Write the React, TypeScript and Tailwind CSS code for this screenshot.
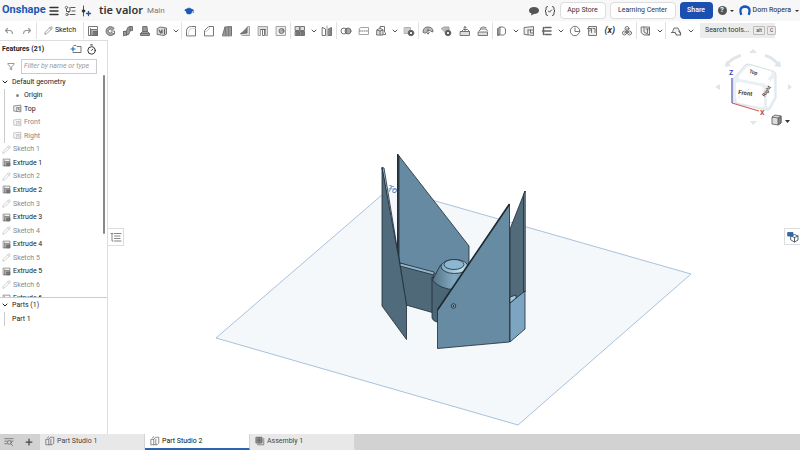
import type { ReactNode } from 'react';
import { ChevronDown, Filter, GraduationCap, Pencil, Plus, Timer } from 'lucide-react';

const S = '#666';
const G = '#999';

function Svg({ children, className = 'w-3 h-3' }: { children: ReactNode; className?: string }) {
  return (
    <svg viewBox="0 0 12 12" className={className} fill="none" stroke={S} strokeWidth="0.9" strokeLinecap="round" strokeLinejoin="round">
      {children}
    </svg>
  );
}

const icons: Record<string, ReactNode> = {
  Undo: <path d="M4.500 3.500 2.500 5.500l2 2M2.800 5.500H7q2.200 0 2.400 3" stroke={G} strokeWidth="1.200" />,
  Redo: <path d="m7.500 3.500 2 2-2 2M9.200 5.500H5Q2.800 5.500 2.600 8.500" stroke={G} strokeWidth="1.200" />,
  Extrude: <><path d="M3.500 10.500H1.500v-9h9v2M3.500 3.500v7" /><path d="M4.500 4.500h6v6h-6z" fill="#bbb" /><path d="M6.500 6.500h4v4h-4z" fill="#777" /></>,
  Revolve: <><path d="M10 3.200A4.500 4.500 0 1 0 10 9L7.500 7.500a2 2 0 1 1 0-3z" fill="#aaa" /><path d="M7 6h3.500v3" /></>,
  Sweep: <><path d="M1.500 10.500v-4Q5 7 5 4.500T8 1.500h2.500v4Q7.500 5 7.500 7.500T4.500 10z" fill="#999" /><path d="M1.500 6.500h3v4M8 1.500v4" /></>,
  Loft: <><path d="M4 1.500h4l.5 5 2 2v2h-9v-2l2-2z" fill="#999" /><path d="M3.500 6.500h5M1.500 8.500h9" /></>,
  Thicken: <><path d="M1.500 3.500 4 2l6.500 1v6L8 10.500l-6.500-1z" fill="#ddd" /><path d="m3 5 1.500 3L6 5v3M8.500 4v5" strokeWidth="1.200" /></>,
  Fillet: <><path d="M1.500 10.500v-4q0-5 5-5h4v9z" /><path d="M3.500 10.500v-3q0-4 4-4h3" stroke="#ccc" /></>,
  Chamfer: <><path d="M1.500 10.500v-5l4-4h5v9z" /><path d="m1.500 5.500 2 1 3-3-1-2" stroke="#bbb" /></>,
  Draft: <><path d="M1.500 10.500 4 2l6.500-.5v9z" fill="#999" /><path d="M4 2 5 10.500M7.500 2v8.500" stroke="#777" /></>,
  Rib: <><path d="M1.500 8.500 7 6l1.500-4.500h2v9h-7z" fill="#ddd" stroke={G} /><path d="M2.500 8.500 8 8V3z" fill="#777" /></>,
  Shell: <><path d="M1.500 1.500h9v9h-2v-6h-5v6h-2z" fill="#ddd" stroke={G} /><path d="M3.500 4.500h5M5.500 4.500v6h2v-6" /></>,
  Hole: <><path d="M1.500 1.500h9v9h-9z" fill="#eee" stroke={G} /><circle cx="6.500" cy="6" r="2.500" fill="#bbb" /><path d="m6.500 6 2-2" /></>,
  Pattern: <><path d="M1.500 1.500h4v4h-4zM6.500 1.500h4v4h-4z" fill="#ddd" /><path d="M1.500 6.500h4v4h-4zM6.500 6.500h4v4h-4z" fill="#777" /></>,
  Mirror: <><path d="M1.500 2.500 4.500 4v6.500h-3z" /><path d="M6 1v10" stroke={G} /><path d="M7.500 4l3-1.500v8h-3z" fill="#888" /></>,
  Boolean: <><circle cx="4" cy="6" r="3" /><circle cx="8" cy="6" r="3" fill="#aaa" /><path d="M6 3.800a3 3 0 0 1 0 4.400" /></>,
  Split: <><path d="M1.500 3.500 3 2.500h7.500v7H1.500z" stroke={G} /><path d="M1.500 6h9" strokeDasharray="1 1.300" /></>,
  Transform: <><path d="m2 5 3-2 3 2v5H2zM2 5l3 1 3-1" fill="#ddd" /><path d="M5 3V1.500h4.500V7M8.500 9.500h2V8" /><path d="M5 6v4" /></>,
  'Delete part': <><path d="M1.500 2.500h6v6h-6z" fill="#ccc" stroke="#aaa" /><circle cx="8" cy="8" r="2.800" fill="#555" /><path d="m7.200 7.200 1.600 1.600m0-1.600L7.200 8.800" stroke="#fff" /></>,
  'Modify fillet': <><path d="M1 7q0-5 5-5t5 5L8.500 6Q6 4 3.500 8z" fill="#bbb" /><path d="M6 4v5M4.500 7.500 6 9l1.500-1.500" /></>,
  'Delete face': <><path d="M1.500 3.500 4 2h5v5H5z" fill="#bbb" stroke={G} /><circle cx="8" cy="8" r="2.800" fill="#555" /><path d="m7.200 7.200 1.600 1.600m0-1.600L7.200 8.800" stroke="#fff" /></>,
  'Move face': <><path d="M1.500 6.500h9v4h-9z" fill="#ddd" /><path d="m2.500 6.500 2-2h4l2 2M6 6V1.500M4.700 2.800 6 1.500l1.300 1.300" /></>,
  'Replace face': <><path d="M1.500 7h9v3.500h-9z" fill="#ddd" /><path d="m2 6 2-2h5l1.500 2M3 3.500q3-3 6-1" /></>,
  'Copy part': <><path d="M2 3.500 4 2v7l-2 1.500z" fill="#ccc" /><path d="M4 2h3.500L9.500 4v4.500L7.500 10H2V3.500" /></>,
  Plane: <><path d="M1.500 2.500 10.500 1.500v9l-9-1z" fill="#eee" /><path d="M5 5h5M5 5v4.500M7.500 5v3H10" /></>,
  Frame: <path d="M4 2.500h6M4 6h6M4 9.500h6M2.500 2.500V9.500M1.500 6h3" strokeWidth="1.500" />,
  Helix: <><circle cx="6" cy="6" r="4.700" /><path d="M6 3v3.500h3.500" /></>,
  Derive: <><path d="M3 1.500h7.500v9H3z" fill="#eee" /><path d="M1.500 3.500h4v4M3 6.500 5.500 4M7 3.500h2v4" /></>,
  Composite: <><circle cx="6" cy="3.500" r="2" /><circle cx="3.500" cy="8" r="2" /><circle cx="8.500" cy="8" r="2" /><path d="M6 3.500v3M3.500 8 6 6.500 8.500 8" /></>,
  'Sheet metal': <><path d="M1.500 2h8v8H4L1.500 8z" fill="#eee" /><path d="M4 2v5l5.500 3M6 4h3M7.500 4v4" /></>,
  'Custom feature': <><path d="m2.500 7 1.500-4h4l2 4" fill="#eee" /><path d="M1.500 7.500h3.500l1.500 2.500h4V8L9 6.500" strokeWidth="1.200" /></>,
};

const groups: { width: string; tools: string[] }[] = [
  { width: 'w-[98px]', tools: ['Extrude', 'Revolve', 'Sweep', 'Loft', 'Thicken', 'v'] },
  { width: 'w-[109px]', tools: ['Fillet', 'Chamfer', 'Draft', 'Rib', 'Shell', 'Hole'] },
  { width: 'w-[46px]', tools: ['Pattern', 'v', 'Mirror'] },
  { width: 'w-[82px]', tools: ['Boolean', 'Split', 'Transform', 'v', 'Delete part'] },
  { width: 'w-[74px]', tools: ['Modify fillet', 'Delete face', 'Move face', 'Replace face'] },
  { width: 'w-[144px]', tools: ['Copy part', 'v', 'Plane', 'Frame', 'v', 'Helix', 'Derive', 'Variable', 'Composite'] },
  { width: 'w-[29px]', tools: ['Sheet metal', 'v'] },
];

const features = [
  'Sketch 1', 'Extrude 1', 'Sketch 2', 'Extrude 2', 'Sketch 3', 'Extrude 3',
  'Sketch 4', 'Extrude 4', 'Sketch 5', 'Extrude 5', 'Sketch 6', 'Extrude 6',
];

function Tool({ name }: { name: string }) {
  if (name === 'v') {
    return (
      <button aria-label="More tools" className="w-[10px] shrink-0 flex justify-center">
        <ChevronDown className="w-2 h-2 text-gray-600" strokeWidth={3} />
      </button>
    );
  }
  return (
    <button aria-label={name} className="flex-1 flex justify-center">
      {name === 'Variable' ? <span className="text-[9px] font-bold italic text-[#333]">(x)</span> : <Svg>{icons[name]}</Svg>}
    </button>
  );
}

function Header() {
  return (
    <header className="h-[21px] shrink-0 bg-[#f7f7f7] flex items-center pl-[2px] pr-px text-[7px]">
      <a href="#" className="w-[42px] text-[11px] font-bold text-[#1b57b3]">Onshape</a>
      <button aria-label="Menu" className="ml-1">
        <Svg><path d="M2 2.500h8M2 6h8M2 9.500h8" stroke="#333" strokeWidth="1.400" /></Svg>
      </button>
      <button aria-label="Versions and history" className="ml-1">
        <Svg><circle cx="2.500" cy="2.500" r="1.200" /><circle cx="3" cy="9.500" r="1.200" /><path d="M2.500 4v2.500h3M4.500 8Q7 7 6 2.500M7 2.500h4M8 6h3M6 9.500h5" stroke="#444" /></Svg>
      </button>
      <button aria-label="Create version" className="ml-1">
        <Svg><path d="M3.500 1v10" stroke="#444" /><path d="M8.500 6.500v4M6.500 8.500h4" stroke="#25558f" strokeWidth="1.300" /><circle cx="3.500" cy="6" r="1.300" fill="#333" stroke="#333" /></Svg>
      </button>
      <h1 className="ml-[7px] text-[11px] font-semibold text-[#333] whitespace-nowrap font-['Noto_Sans',sans-serif]">tie valor</h1>
      <span className="ml-1 text-[8px] text-[#777]">Main</span>
      <button aria-label="Learning" className="ml-[19px]">
        <GraduationCap className="w-[10px] h-[10px] text-[#1b57b3]" fill="#1b57b3" />
      </button>
      <div className="flex-1" />
      <button aria-label="Comments">
        <Svg><path d="M6 2c3 0 5 1.500 5 3.500S9 9 6 9L3 10.500 3.500 8.500C2 8 1 7 1 5.500 1 3.500 3 2 6 2z" fill="#555" stroke="none" /></Svg>
      </button>
      <button aria-label="FeatureScript" className="ml-1 mr-1">
        <Svg><path d="M3.500 1.500q-1.500 0-1.500 1.500v2L1 6l1 1v2q0 1.500 1.500 1.500M8.500 1.500Q10 1.500 10 3v2l1 1-1 1v2q0 1.500-1.500 1.500M4.500 6l1 1.200 2-2.200" stroke="#333" /></Svg>
      </button>
      <button className="w-[46px] h-[17px] bg-white border border-[#ddd] rounded-sm text-[#333]">App Store</button>
      <button className="ml-1 w-[66px] h-[17px] bg-white border border-[#ddd] rounded-sm text-[#333] whitespace-nowrap">Learning Center</button>
      <button className="ml-1 w-[33px] h-[17px] bg-[#1b50b0] rounded-sm font-medium text-white">Share</button>
      <button aria-label="Help" className="ml-[5px] flex items-center">
        <span className="w-[9px] h-[9px] rounded-full bg-[#555] text-white leading-[9px] font-bold">?</span>
        <span className="ml-[3px] border-x-2 border-t-2 border-x-transparent border-t-[#333]" />
      </button>
      <button className="ml-[5px] flex items-center text-[#222] whitespace-nowrap">
        <Svg><path d="M2.300 9.800Q-.5 2 6 1.500 12.500 2 9.700 9.800" stroke="#1556c0" strokeWidth="2.300" strokeLinecap="butt" /></Svg>
        <span className="ml-[2px]">Dom Ropera</span>
        <span className="ml-[4px] border-x-2 border-t-2 border-x-transparent border-t-[#333]" />
      </button>
    </header>
  );
}

function Toolbar() {
  return (
    <div className="h-[19px] shrink-0 bg-white flex items-center text-[7px]">
      <div className="w-[37px] h-[17px] shrink-0 flex items-center border-r border-[#e2e2e2]"><Tool name="Undo" /><Tool name="Redo" /></div>
      <button className="w-[47px] h-[17px] shrink-0 flex items-center justify-center gap-[2px] border-r border-[#e2e2e2] text-[#222]">
        <Pencil className="w-[9px] h-[9px] text-[#555]" strokeWidth={1.500} />Sketch
      </button>
      {groups.map((g) => (
        <div key={g.width} className={`${g.width} h-[17px] shrink-0 flex items-center border-r border-[#e2e2e2]`}>
          {g.tools.map((t, i) => <Tool key={i} name={t} />)}
        </div>
      ))}
      <div className="w-[30px] h-[17px] shrink-0 flex items-center"><Tool name="Custom feature" /><Tool name="v" /></div>
      <button className="ml-1 w-[75px] h-[15px] shrink-0 bg-[#ececec] flex items-center pl-[5px] text-[#333] whitespace-nowrap">
        Search tools...
        <kbd className="ml-1 px-[2px] border border-[#bbb] rounded-[1px] text-[5px] leading-[7px] font-[inherit]">alt</kbd>
        <kbd className="ml-[2px] px-[2px] border border-[#bbb] rounded-[1px] text-[5px] leading-[7px] font-[inherit]">C</kbd>
      </button>
    </div>
  );
}

function Sidebar() {
  return (
    <aside className="w-[108px] shrink-0 bg-white border-r border-t border-[#ddd] text-[7px] leading-[12px] text-[#222]">
      <div className="h-4 flex items-center pl-[2px] pr-[10px]">
        <h2 className="font-bold flex-1">Features (21)</h2>
        <button aria-label="Add folder" className="mr-1">
          <Svg><path d="M4 2.500h2l1 1h4v6H3" /><path d="M3 4v4M1 6h4" stroke="#1b6fb5" strokeWidth="1.200" /></Svg>
        </button>
        <button aria-label="Regeneration times"><Timer className="w-[11px] h-[11px]" /></button>
      </div>
      <div className="h-[18px] flex items-center pl-[7px] pr-[10px]">
        <Filter className="w-[9px] h-[9px] text-[#555]" strokeWidth={1.800} />
        <input aria-label="Filter features" placeholder="Filter by name or type" className="ml-[6px] w-[76px] h-[15px] border border-[#ccc] px-[2px] italic placeholder:text-[#999]" />
      </div>
      <div className="h-[223px] overflow-hidden border-b border-[#ccc] flex">
        <ul className="h-[230px] flex-1 grid auto-rows-fr">
          <li className="flex items-center gap-[3px] pl-px"><ChevronDown className="w-2 h-2" strokeWidth={3} />Default geometry</li>
          <li className="ml-1 pl-[11px] border-l border-[#ccc] flex items-center gap-[5px]"><span className="w-[3px] h-[3px] rounded-full bg-[#888]" />Origin</li>
          {['Top', 'Front', 'Right'].map((p) => (
            <li key={p} className={`ml-1 pl-2 border-l border-[#ccc] flex items-center gap-[2px] ${p === 'Top' ? '' : 'text-[#888]'}`}>
              <span className={p === 'Top' ? '' : 'opacity-50'}><Svg className="w-[9px] h-[9px]">{icons.Plane}</Svg></span>{p}
            </li>
          ))}
          {features.map((f) => (
            <li key={f} className={`pl-[2px] flex items-center gap-[2px] ${f.startsWith('Sketch') ? 'text-[#888]' : ''}`}>
              {f.startsWith('Sketch') ? <Pencil className="w-[9px] h-[9px] text-[#bbb]" strokeWidth={1.800} /> : <Svg className="w-[9px] h-[9px]">{icons.Extrude}</Svg>}
              {f}
            </li>
          ))}
        </ul>
        <div className="w-[2px] h-[159px] mr-[2px] bg-[#888] rounded-full" />
      </div>
      <div className="h-[14px] flex items-center gap-[3px] pl-px"><ChevronDown className="w-2 h-2" strokeWidth={3} />Parts (1)</div>
      <div className="ml-1 h-[14px] pl-[7px] border-l border-[#ccc] flex items-center">Part 1</div>
    </aside>
  );
}

function Model() {
  return (
    <svg viewBox="108 40 692 394" className="w-full h-full" strokeLinejoin="round">
      <defs>
        <linearGradient id="rim" x1="0" y1="0" x2="1" y2="0">
          <stop offset="0" stopColor="#7fa9c2" />
          <stop offset="0.8" stopColor="#c3dfec" />
          <stop offset="1" stopColor="#86afc8" />
        </linearGradient>
        <linearGradient id="cone" x1="0" y1="0" x2="1" y2="0">
          <stop offset="0" stopColor="#557386" />
          <stop offset="0.6" stopColor="#83aac2" />
          <stop offset="1" stopColor="#668ba2" />
        </linearGradient>
      </defs>
      <path d="m216 338 174-150 301 86-173 151z" fill="#f4f8fb" stroke="#a9c1dc" />
      <text x="387" y="191" fontSize="9" fontStyle="italic" fill="#4a76b5" transform="rotate(16 387 191)">To</text>
      <g stroke="#1e2a32" strokeWidth="0.800">
        <path d="m400 263 34 9v41l-28-8z" fill="#4f6979" />
        <path d="m397.500 154 71.500 92v25l-35 3-34-11-2.500-5z" fill="#668aa1" />
        <path d="m400 263 34 9v3l-34-9z" fill="#8db6cf" />
        <path d="M397.500 154v104l1.500 5V156z" fill="#344753" />
        <path d="M382 167.500 384 168l15 91v8z" fill="#aac6d7" />
        <path d="m382 167.500 17 92 7.500 45v35L382 306z" fill="#506b7c" />
        <path d="M432 277v41q1 3 5 4l20-5v-38z" fill="#4b6677" />
        <path d="m440.500 265-8 15q6 9 24 10l12-24z" fill="url(#cone)" />
        <ellipse cx="454.500" cy="266.500" rx="13.500" ry="7" fill="url(#rim)" />
        <ellipse cx="454" cy="264.500" rx="10" ry="5" fill="#8bb7d1" />
        <path d="m525 191-15 38v75l15-12z" fill="#526b7b" />
        <path d="M523.500 195v98l1.500-1V191z" fill="#7d9aac" />
        <path d="m510 303 15-12v38l-15 13z" fill="#7ca5c2" />
        <path d="m510 297 6-2v3l-6 5z" fill="#a6c8dc" />
        <path d="M509.500 204v138l-72 6.500V310z" fill="#678ba2" />
        <path d="m437.500 310 72-106" strokeWidth="1.600" />
        <circle cx="453.500" cy="306" r="2.300" fill="#8aa6b6" />
        <circle cx="453.500" cy="306" r="0.600" />
      </g>
    </svg>
  );
}

function ViewCube() {
  return (
    <svg viewBox="0 0 90 90" className="absolute right-0 top-[5px] w-[90px] h-[90px]">
      <g fill="#dfe5e9">
        <path d="m43 4 4 4h-8zM43 80l-3-4h7zM5 42l5-3v6zM82 42l-4-3v6z" />
        <path d="m15 22 1-6 1 1q6-6 14-8v3q-7 2-12 7l2 2zM71 22l-7-1 2-2q-4-5-11-7V9q8 2 13 8l2-1z" />
      </g>
      <path d="m23 34 12-14q2-1 4-1l24 7q3 1 3 4v23l-6 11q-1 2-4 1l-31-7q-2-1-2-3z" fill="#e9eff2" stroke="#dbe4e9" strokeLinejoin="round" />
      <g fill="#fff">
        <path d="m29 31 8-9q2-2 5-1l18 5q3 1 1 4l-6 7q-2 2-5 1l-20-4q-2 0-1-3z" />
        <path d="M26 40q0-4 4-3l20 4q4 1 4 5v13q0 4-4 3l-20-4q-4-1-4-4z" />
        <path d="m57 43 5-9q2-2 2 1v17l-5 9q-2 2-2-1z" />
        <circle cx="57" cy="37" r="3" />
      </g>
      <path d="m22 58 17-14" stroke="#b8d8c0" strokeWidth="0.800" strokeDasharray="2 2" />
      <g fontSize="6" fontWeight="bold" fill="#444" textAnchor="middle">
        <text x="35" y="50" transform="rotate(8 35 50)">Front</text>
        <text x="43" y="29" fontSize="5" transform="rotate(16 43 29)">Top</text>
        <text x="58" y="47" fontSize="5" transform="rotate(-58 58 47)">Right</text>
      </g>
      <path d="M22 33v25" stroke="#5257bd" strokeWidth="1.200" />
      <path d="m22 58 27 8" stroke="#cf5c60" strokeWidth="1.200" />
      <text x="19" y="30" fontSize="7" fontWeight="bold" fill="#3c45b0">Z</text>
      <text x="50" y="70" fontSize="7" fontWeight="bold" fill="#c1444c">X</text>
      <g stroke="#555" strokeLinejoin="round" strokeWidth="0.800">
        <path d="m62 72 3-2 6 1v7l-3 2-6-1z" fill="#ddd" />
        <path d="m68 73 3-2v7l-3 2z" fill="#888" />
        <path d="m62 72 6 1" />
      </g>
      <path d="M75 75h5l-2.500 3z" fill="#333" />
    </svg>
  );
}

const tabs = ['Part Studio 1', 'Part Studio 2', 'Assembly 1'];

function TabBar() {
  return (
    <footer className="h-4 shrink-0 bg-[#d2d2d2] flex items-center text-[7px] text-[#444]">
      <button aria-label="Tab manager" className="w-[18px] flex justify-center">
        <Svg className="w-[10px] h-[10px]"><path d="M1 2h10M1 5h3M1 8h3M8.500 5h2.500" /><circle cx="6.500" cy="6.500" r="2.300" /><path d="m8 8 2.500 2.500" /></Svg>
      </button>
      <button aria-label="Add tab" className="w-[22px] flex justify-center"><Plus className="w-[10px] h-[10px] text-[#444]" strokeWidth={3} /></button>
      {tabs.map((t) => (
        <button key={t} className={`w-[105px] h-full border-r border-r-[#d2d2d2] border-b-2 pl-[5px] flex items-center gap-[2px] ${t === 'Part Studio 2' ? 'bg-white border-b-[#2d65b0] text-[#111]' : 'bg-[#e8e8e8] border-b-[#e8e8e8]'}`}>
          <Svg className="w-[10px] h-[10px]">
            {t === 'Assembly 1'
              ? <><path d="M1.500 1.500h7v7h-7z" fill="#888" /><path d="M3 10.500h7.500V3M1.500 5h7M5 1.500v7" /></>
              : <><path d="M1.500 4h3v6.500h-3zM4.500 4l2-2.500h4v7l-2 2h-4" /><path d="M7 4v6M3 2l1.500-1" /></>}
          </Svg>
          {t}
        </button>
      ))}
    </footer>
  );
}

export default function App() {
  return (
    <div className="h-screen flex flex-col overflow-hidden bg-white font-['Roboto',sans-serif]">
      <Header />
      <Toolbar />
      <div className="flex-1 min-h-0 flex">
        <Sidebar />
        <main className="relative flex-1 min-w-0">
          <Model />
          <ViewCube />
          <button aria-label="Feature list" className="absolute -left-px top-[188px] w-[17px] h-[18px] bg-white border border-[#ddd] flex items-center justify-center">
            <Svg><path d="M1 2.500h2M4.500 2.500H11M4.500 5H10M4.500 7.500H10M4.500 10H11M2 2.500V10h1" stroke="#777" /></Svg>
          </button>
          <button aria-label="Appearance panel" className="absolute right-0 top-[188px] w-4 h-[17px] bg-white border border-r-0 border-[#ddd] flex items-center justify-center">
            <Svg><path d="m4 5 3.500-1.500L11 5v4l-3.500 2L4 9zM4 5l3.500 1.500L11 5M7.500 6.500V11" stroke="#456" /><path d="M1 1.500h5V5H1z" fill="#31699f" stroke="#31699f" /></Svg>
          </button>
        </main>
      </div>
      <TabBar />
    </div>
  );
}
